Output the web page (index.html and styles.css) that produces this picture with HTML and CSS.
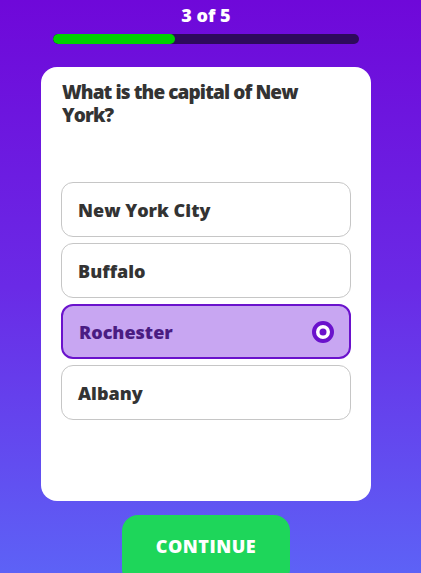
FILE: index.html
```html
<!DOCTYPE html>
<html lang="en">
<head>
  <meta charset="UTF-8" />
  <meta name="viewport" content="width=device-width, initial-scale=1.0"/>
  <title>Quiz</title>
  <link rel="stylesheet" href="styles.css">
</head>
<body>
  <div class="quiz">
    <header class="progress">
      <div class="progress-label">3 of 5</div>
      <div class="progress-track">
        <div class="progress-fill" style="width: 40%"></div>
      </div>
    </header>

    <section class="card">
      <h2 class="question">What is the capital of New York?</h2>

      <div class="options">
        <div class="option">New York City</div>
        <div class="option">Buffalo</div>
        <div class="option selected">
          Rochester
          <svg class="radio" width="22" height="22" viewBox="0 0 22 22">
            <circle cx="11" cy="11" r="9" fill="#fff" stroke="#6a12cc" stroke-width="4"/>
            <circle cx="11" cy="11" r="3.5" fill="#6a12cc"/>
          </svg>
        </div>
        <div class="option">Albany</div>
      </div>
    </section>

    <button class="continue">CONTINUE</button>
  </div>
</body>
</html>
```

FILE: styles.css
```css
html, body {
  margin: 0;
  padding: 0;
  height: 100%;
}

body {
  font-family: 'Open Sans', 'DejaVu Sans', sans-serif;
  background: linear-gradient(180deg, #6f08d9 0%, #6a2ae6 50%, #5d62f6 100%);
  overflow: hidden;
}

.quiz {
  width: 330px;
  margin-left: 41px;
  display: flex;
  flex-direction: column;
  align-items: center;
}

.progress {
  width: 100%;
  display: flex;
  flex-direction: column;
  align-items: center;
  padding-top: 4px;
}

.progress-label {
  color: #fff;
  font-weight: 800;
  font-size: 18px;
  line-height: 22px;
}

.progress-track {
  width: 306px;
  height: 10px;
  margin-top: 8px;
  background: #2e0a5c;
  border-radius: 5px;
  overflow: hidden;
}

.progress-fill {
  height: 100%;
  background: #00d000;
  border-radius: 5px;
}

.card {
  box-sizing: border-box;
  width: 330px;
  height: 434px;
  margin-top: 23px;
  background: #fff;
  border-radius: 16px;
  padding: 14px 20px 0 20px;
}

.question {
  margin: 0;
  color: #333;
  font-size: 19px;
  font-weight: 800;
  line-height: 23px;
  letter-spacing: -0.9px;
  padding: 0 20px 0 1px;
}

.options {
  margin-top: 55px;
  display: flex;
  flex-direction: column;
  gap: 6px;
}

.option {
  box-sizing: border-box;
  height: 55px;
  border: 1.5px solid #c6c6c6;
  border-radius: 12px;
  padding: 0 16px;
  display: flex;
  align-items: center;
  justify-content: space-between;
  color: #333;
  font-size: 18px;
  font-weight: 800;
}

.option.selected {
  background: #c8a6f2;
  border: 2px solid #6a12cc;
  color: #4a1c82;
}

.radio {
  margin-right: -1px;
}

.continue {
  margin-top: 14px;
  width: 168px;
  height: 70px;
  border: none;
  border-radius: 16px;
  background: #1ed65a;
  color: #fff;
  font-family: inherit;
  font-size: 18px;
  font-weight: 800;
  letter-spacing: 0.5px;
  padding-bottom: 10px;
  cursor: pointer;
}
```
